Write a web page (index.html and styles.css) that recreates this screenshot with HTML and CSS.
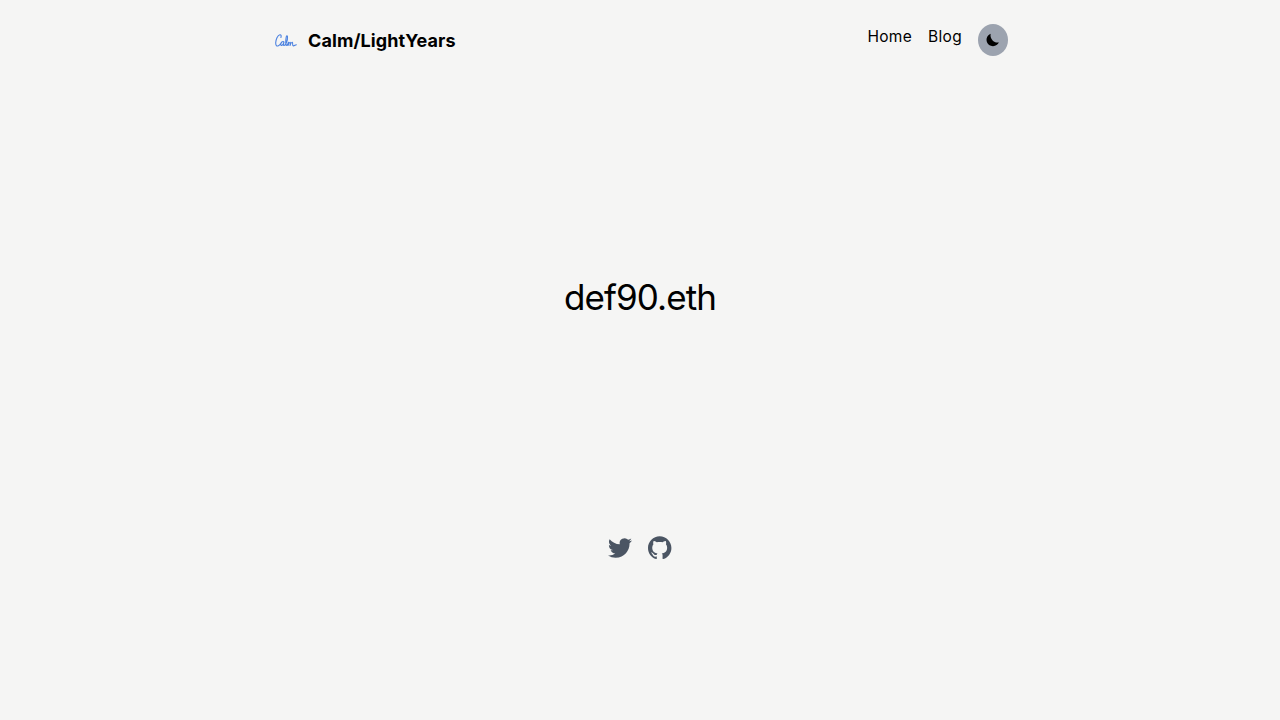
FILE: index.html
```html
<!DOCTYPE html>
<html lang="en">
<head>
<meta charset="utf-8">
<title>Calm/LightYears</title>
<link rel="stylesheet" href="styles.css">
</head>
<body>
<header class="header">
  <a class="brand" href="#">
    <svg class="logo" viewBox="0 0 24 16" aria-hidden="true"><path d="M6.4 4.5C7 2.9 6.6 1.6 5.4 1.8 3.1 2.2 1.3 6.8 1.2 9.8c-.1 2.6 1 3.8 2.7 3 1.1-.5 1.9-1.5 2.5-2.4M9.2 8.8C8 7.9 6.5 9.5 6.3 11.2c-.2 1.8 1.5 1.6 2.4-.2l.8-2c-.8 2.4-.7 3.8.2 3.5 1.8-.6 3.5-5.2 3.3-8.5-.1-1.7-1-1.5-1.3.2-.5 2.7-.8 8.3.3 8.2.9-.1 1.6-1.8 2-3.2-.1 1.2-.3 2.3-.5 3.3.6-1.8 1.4-3.4 2.1-3.3.7.1.1 2-.1 3.3.6-1.8 1.5-3.4 2.3-3.2.8.2-.2 3.1.8 3.5.9.3 1.7-.5 3.2-1.1"/></svg>
    <span>Calm/LightYears</span>
  </a>
  <nav class="nav">
    <a href="#">Home</a>
    <a href="#">Blog</a>
    <button class="toggle" type="button" aria-label="Toggle theme">
      <svg class="moon" viewBox="0 0 20 20"><path d="M17.3 12.8A8 8 0 1 1 7.2 2.2C6.2 5.4 7.6 8.8 9.8 10.8c2.1 2 4.6 2.6 7.5 2z"/></svg>
    </button>
  </nav>
</header>
<main class="hero"><h1 class="title">def90.eth</h1></main>
<footer class="social">
  <a href="#" aria-label="Twitter"><svg viewBox="0 0 24 24"><path d="M23.953 4.57a10 10 0 01-2.825.775 4.958 4.958 0 002.163-2.723c-.951.555-2.005.959-3.127 1.184a4.92 4.92 0 00-8.384 4.482C7.69 8.095 4.067 6.13 1.64 3.162a4.822 4.822 0 00-.666 2.475c0 1.71.87 3.213 2.188 4.096a4.904 4.904 0 01-2.228-.616v.06a4.923 4.923 0 003.946 4.827 4.996 4.996 0 01-2.212.085 4.936 4.936 0 004.604 3.417 9.867 9.867 0 01-6.102 2.105c-.39 0-.779-.023-1.17-.067a13.995 13.995 0 007.557 2.209c9.053 0 13.998-7.496 13.998-13.985 0-.21 0-.42-.015-.63A9.935 9.935 0 0024 4.59z"/></svg></a>
  <a href="#" aria-label="GitHub"><svg viewBox="0 0 24.6 24.6"><path d="M12 .297c-6.63 0-12 5.373-12 12 0 5.303 3.438 9.8 8.205 11.385.6.113.82-.258.82-.577 0-.285-.01-1.04-.015-2.04-3.338.724-4.042-1.61-4.042-1.61C4.422 18.07 3.633 17.7 3.633 17.7c-1.087-.744.084-.729.084-.729 1.205.084 1.838 1.236 1.838 1.236 1.07 1.835 2.809 1.305 3.495.998.108-.776.417-1.305.76-1.605-2.665-.3-5.466-1.332-5.466-5.93 0-1.31.465-2.38 1.235-3.22-.135-.303-.54-1.523.105-3.176 0 0 1.005-.322 3.3 1.23.96-.267 1.98-.399 3-.405 1.02.006 2.04.138 3 .405 2.28-1.552 3.285-1.23 3.285-1.23.645 1.653.24 2.873.12 3.176.765.84 1.23 1.91 1.23 3.22 0 4.61-2.805 5.625-5.475 5.92.42.36.81 1.096.81 2.22 0 1.606-.015 2.896-.015 3.286 0 .315.21.69.825.57C20.565 22.092 24 17.592 24 12.297c0-6.627-5.373-12-12-12"/></svg></a>
</footer>
</body>
</html>
```
FILE: styles.css
```css
* { box-sizing: border-box; }
body {
  margin: 0;
  height: 100vh;
  overflow: hidden;
  background: #f5f5f4;
  color: #000;
  font: 16px/24px Inter, sans-serif;
}
a { color: inherit; text-decoration: none; }
svg { display: block; fill: currentColor; }
.header {
  width: 736px;
  height: 80px;
  margin: 0 auto;
  padding: 24px 0;
  display: flex;
  justify-content: space-between;
}
.brand {
  display: flex;
  align-items: center;
  gap: 10px;
  padding: 0 2px;
  height: 34px;
  font-size: 18px;
  font-weight: 700;
  letter-spacing: 0.1px;
}
.logo {
  width: 25px;
  height: 16px;
  margin-right: -1px;
  fill: none;
  stroke: #4c82e0;
  stroke-width: 1.1;
  stroke-linecap: round;
  stroke-linejoin: round;
}
.nav {
  display: flex;
  align-items: flex-start;
  gap: 16px;
  font-size: 15.5px;
  line-height: 25px;
  letter-spacing: 0.3px;
}
.toggle {
  display: flex;
  align-items: center;
  justify-content: center;
  width: 30px;
  height: 32px;
  padding: 0;
  border: 0;
  border-radius: 50%;
  background: #9ca3af;
  color: #000;
}
.moon { width: 16px; height: 16px; }
.hero { padding-top: 197px; text-align: center; }
.title {
  margin: 0;
  font-size: 35px;
  line-height: 40px;
  font-weight: 400;
  letter-spacing: -0.95px;
}
.social {
  display: flex;
  justify-content: center;
  gap: 16px;
  padding-top: 219px;
  color: #4b5563;
}
.social svg { width: 24px; height: 24px; }
```
